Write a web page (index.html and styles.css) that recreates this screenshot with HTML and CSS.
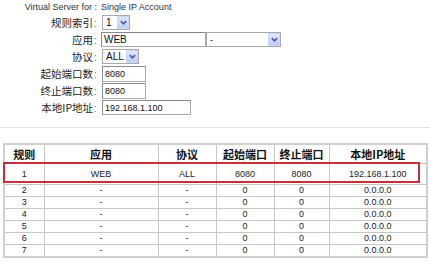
FILE: index.html
```html
<!DOCTYPE html>
<html lang="zh">
<head>
<meta charset="utf-8">
<title>Virtual Server</title>
<link rel="stylesheet" href="styles.css">
</head>
<body>
<div class="page">
  <div class="form">
    <div class="lbl en">Virtual Server for :</div>
    <div class="val en">Single IP Account</div>

    <div class="lbl">规则索引<span class="colon">:</span></div>
    <div class="val">
      <span class="sel w-idx"><span class="sv big">1</span><span class="arr"><svg viewBox="0 0 10 10" width="9" height="9"><polyline points="2,3.5 5,6.5 8,3.5" /></svg></span></span>
    </div>

    <div class="lbl">应用<span class="colon">:</span></div>
    <div class="val">
      <span class="inp w-app big">WEB</span><span class="sel w-app2"><span class="sv">-</span><span class="arr"><svg viewBox="0 0 10 10" width="9" height="9"><polyline points="2,3.5 5,6.5 8,3.5" /></svg></span></span>
    </div>

    <div class="lbl">协议<span class="colon">:</span></div>
    <div class="val">
      <span class="sel w-proto"><span class="sv big">ALL</span><span class="arr"><svg viewBox="0 0 10 10" width="9" height="9"><polyline points="2,3.5 5,6.5 8,3.5" /></svg></span></span>
    </div>

    <div class="lbl">起始端口数<span class="colon">:</span></div>
    <div class="val"><span class="inp w-port">8080</span></div>

    <div class="lbl">终止端口数<span class="colon">:</span></div>
    <div class="val"><span class="inp w-port">8080</span></div>

    <div class="lbl">本地IP地址<span class="colon">:</span></div>
    <div class="val"><span class="inp w-ip">192.168.1.100</span></div>
  </div>

  <div class="sep"></div>

  <div class="tablewrap">
    <table class="rules">
      <colgroup>
        <col class="c1"><col class="c2"><col class="c3"><col class="c4"><col class="c5"><col class="c6">
      </colgroup>
      <thead>
        <tr><th>规则</th><th>应用</th><th>协议</th><th>起始端口</th><th>终止端口</th><th>本地IP地址</th></tr>
      </thead>
      <tbody>
        <tr class="first"><td>1</td><td>WEB</td><td>ALL</td><td>8080</td><td>8080</td><td>192.168.1.100</td></tr>
        <tr><td>2</td><td>-</td><td>-</td><td>0</td><td>0</td><td>0.0.0.0</td></tr>
        <tr><td>3</td><td>-</td><td>-</td><td>0</td><td>0</td><td>0.0.0.0</td></tr>
        <tr><td>4</td><td>-</td><td>-</td><td>0</td><td>0</td><td>0.0.0.0</td></tr>
        <tr><td>5</td><td>-</td><td>-</td><td>0</td><td>0</td><td>0.0.0.0</td></tr>
        <tr><td>6</td><td>-</td><td>-</td><td>0</td><td>0</td><td>0.0.0.0</td></tr>
        <tr><td>7</td><td>-</td><td>-</td><td>0</td><td>0</td><td>0.0.0.0</td></tr>
      </tbody>
    </table>
    <div class="mark"></div>
  </div>
</div>
</body>
</html>
```
FILE: styles.css
```css
html, body {
  margin: 0;
  padding: 0;
  background: #ffffff;
}
body {
  width: 430px;
  height: 263px;
  overflow: hidden;
  font-family: "Liberation Sans", Arial, "Noto Sans CJK SC", sans-serif;
  color: #222;
}
.page {
  display: flex;
  flex-direction: column;
}
.form {
  display: grid;
  grid-template-columns: 97px auto;
  grid-auto-rows: 15px;
  grid-template-rows: 12px;
  column-gap: 4px;
  row-gap: 2px;
  padding-top: 1px;
  align-items: center;
}
.lbl {
  text-align: right;
  font-family: "Noto Sans CJK SC", sans-serif;
  font-size: 10.5px;
  line-height: 12px;
  color: #222;
  white-space: nowrap;
}
.lbl .colon {
  font-family: "Liberation Sans", Arial, sans-serif;
  color: #777;
  padding-left: 1px;
}
.lbl.en, .val.en {
  font-family: "Liberation Sans", Arial, sans-serif;
  font-size: 9px;
  color: #333;
}
.val {
  display: flex;
  align-items: center;
  height: 15px;
}
.val.en {
  padding-left: 0;
}
.sel, .inp {
  box-sizing: border-box;
  height: 15px;
  border: 1px solid #a9a9a9;
  background: #fff;
  display: inline-flex;
  align-items: center;
  font-family: "Liberation Sans", Arial, sans-serif;
  font-size: 9px;
  color: #111;
}
.inp {
  padding-left: 2px;
  border-top-color: #8a8a8a;
  border-left-color: #8a8a8a;
}
.big {
  font-size: 10px;
}
.sel .sv {
  flex: 1;
  padding-left: 3px;
}
.sel .arr {
  width: 12px;
  height: 13px;
  box-sizing: border-box;
  background: linear-gradient(#dfe8fd, #bccff8);
  border: 1px solid #c9d6f5;
  display: flex;
  align-items: center;
  justify-content: center;
}
.sel .arr svg polyline {
  fill: none;
  stroke: #4a5c96;
  stroke-width: 1.8;
}
.w-idx { width: 28px; margin-left: 1px; }
.w-app { width: 105px; height: 15px; }
.w-app2 { width: 75px; }
.w-proto { width: 37px; margin-left: 1px; }
.w-port { width: 44px; margin-left: 1px; height: 16px; }
.w-ip { width: 89px; margin-left: 1px; }

.sep {
  height: 1px;
  background: #e2e2e2;
  margin-top: 12px;
}

.tablewrap {
  position: relative;
  margin-top: 15px;
  margin-left: 3px;
  width: 423px;
}
.rules {
  width: 423px;
  table-layout: fixed;
  border-collapse: collapse;
  border: 2px solid #cfcfcf;
  font-family: "Liberation Sans", Arial, sans-serif;
  font-size: 9px;
  color: #222;
}
.c1 { width: 40px; }
.c2 { width: 114px; }
.c3 { width: 58px; }
.c4 { width: 58px; }
.c5 { width: 55px; }
.c6 { width: 98px; }
.rules th, .rules td {
  border: 1px solid #c6c6c6;
  text-align: center;
  padding: 0;
  white-space: nowrap;
}
.rules th {
  height: 18px;
  font-family: "Noto Sans CJK SC", sans-serif;
  font-weight: 700;
  font-size: 11px;
  color: #111;
}
.rules td {
  height: 11px;
  line-height: 11px;
}
.rules tr.first td {
  height: 20px;
}
.mark {
  position: absolute;
  left: 0;
  top: 19px;
  width: 417px;
  height: 21px;
  box-sizing: border-box;
  border: 2px solid #c4303a;
}
```
